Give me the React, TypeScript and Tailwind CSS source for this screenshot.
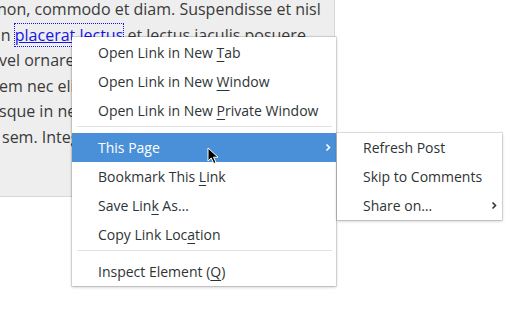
import React from "react";

const U = ({ children }: { children: React.ReactNode }) => (
  <span className="underline decoration-1 underline-offset-[3px]">{children}</span>
);

function Chevron({ className = "" }: { className?: string }) {
  return (
    <svg width="6" height="9" viewBox="0 0 6 9" className={className}>
      <path d="M1.5 1.5 L4.5 4.5 L1.5 7.5" fill="none" stroke="currentColor" strokeWidth="1.6" />
    </svg>
  );
}

function Item({
  children,
  active = false,
  arrow = false,
}: {
  children: React.ReactNode;
  active?: boolean;
  arrow?: boolean;
}) {
  return (
    <div
      className={
        "flex h-[29px] items-center pl-[26px] pr-[5px] " +
        (active ? "bg-[#4a90d9] text-white" : "text-[#2e3436]")
      }
    >
      <span className="flex-1 whitespace-nowrap">{children}</span>
      {arrow && <Chevron className={active ? "text-white" : "text-[#2e3436]"} />}
    </div>
  );
}

function Sep() {
  return (
    <div className="h-[8px] pt-[1px] pl-[5px] pr-[4px]">
      <div className="h-px bg-[#e2e2e2]" />
    </div>
  );
}

export default function App() {
  return (
    <div
      className="relative h-[309px] w-[531px] overflow-hidden bg-white"
      style={{ fontFamily: '"Open Sans", "Noto Sans", sans-serif' }}
    >
      <div className="h-[197px] w-[335px] overflow-hidden border-r border-b border-[#d8d8d8] bg-[#eeeeee] pt-[0px] text-[16px] leading-[25.6px] text-[#3a3a3a]">
        <div className="-mt-[3px] whitespace-nowrap -ml-[3px]">non, commodo et diam. Suspendisse et nisl</div>
        <div className="whitespace-nowrap -ml-[9px]">
          un{" "}
          <a className="text-[#1515e6] underline outline-1 outline-dotted outline-[#1515e6] outline-offset-[0px]">
            placerat lectus
          </a>{" "}
          et lectus iaculis posuere.
        </div>
        <div className="whitespace-nowrap -ml-[1px]">vel ornare eget ligula.</div>
        <div className="whitespace-nowrap -ml-[1px]">em nec elit lorem.</div>
        <div className="whitespace-nowrap -ml-[1px]">sque in neque.</div>
        <div className="whitespace-nowrap ml-[2px]">sem. Integer.</div>
      </div>

      {/* Context menu */}
      <div className="absolute left-[72px] top-[37px] w-[264px] bg-white pt-[1px] text-[14px] shadow-[0_0_0_1px_rgba(0,0,0,0.1),0_1px_3px_rgba(0,0,0,0.25)]">
        <Item>
          Open Link in New <U>T</U>ab
        </Item>
        <Item>
          Open Link in New <U>W</U>indow
        </Item>
        <Item>
          Open Link in New <U>P</U>rivate Window
        </Item>
        <Sep />
        <Item active arrow>
          This Page
        </Item>
        <Item>
          Bookmark This <U>L</U>ink
        </Item>
        <Item>
          Save Lin<U>k</U> As…
        </Item>
        <Item>
          Copy Link Loc<U>a</U>tion
        </Item>
        <Sep />
        <Item>
          Inspect Element (<U>Q</U>)
        </Item>
      </div>

      {/* Submenu */}
      <div className="absolute left-[337px] top-[133px] w-[165px] bg-white text-[14px] shadow-[0_0_0_1px_rgba(0,0,0,0.1),0_1px_3px_rgba(0,0,0,0.25)]">
        <Item>Refresh Post</Item>
        <Item>Skip to Comments</Item>
        <Item arrow>Share on…</Item>
      </div>

      {/* Mouse cursor */}
      <svg
        className="absolute left-[207px] top-[147px]"
        width="14"
        height="18"
        viewBox="0 0 14 18"
      >
        <path
          d="M1 1 L1 14 L4.2 11 L6.8 16.5 L9 15.5 L6.5 10.2 L11 10.2 Z"
          fill="#000"
          stroke="#fff"
          strokeWidth="1"
          strokeLinejoin="round"
        />
      </svg>
    </div>
  );
}
